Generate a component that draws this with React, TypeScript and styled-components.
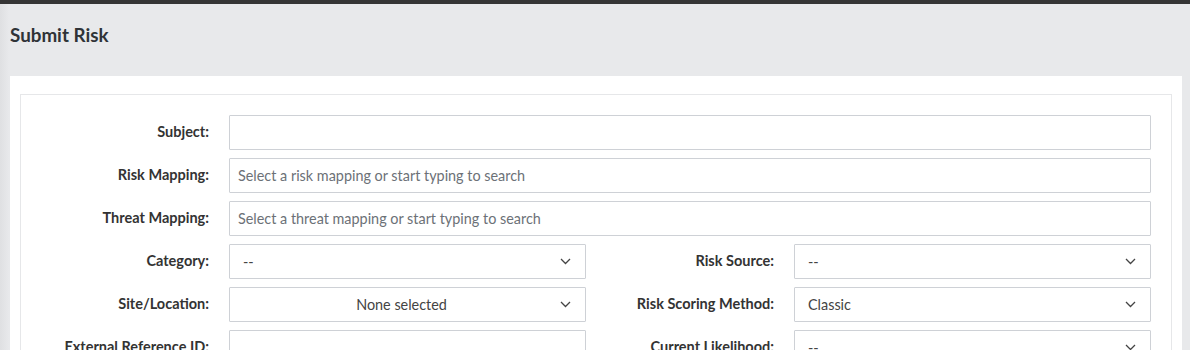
import { FC } from "react";
import styled, { createGlobalStyle } from "styled-components";

const GlobalStyle = createGlobalStyle`
  html, body {
    margin: 0;
    padding: 0;
    background: #e8e9eb;
  }
  body {
    font-family: "Lato", "Noto Sans", sans-serif;
    color: #333;
  }
`;

const Page = styled.div`
  width: 1190px;
  height: 350px;
  overflow: hidden;
  border-top: 4px solid #353535;
  box-sizing: border-box;
  background: linear-gradient(to right, #dfe0e2 0px, #e8e9eb 9px);
`;

const Header = styled.div`
  height: 72px;
  display: flex;
  align-items: center;
  padding: 0 10px;
  box-sizing: border-box;
`;

const Title = styled.h1`
  margin: 0 0 12px;
  font-size: 18.8px;
  font-weight: 700;
  color: #2f3337;
`;

const Card = styled.div`
  margin: 0 8px 0 10px;
  background: #fff;
  padding: 18px 10px 0;
  height: 280px;
`;

const FormBox = styled.div`
  border: 1px solid #e6e7e9;
  border-bottom: none;
  padding: 20px 20px 0 0;
  display: flex;
  flex-direction: column;
  gap: 8px;
`;

const Row = styled.div`
  display: flex;
`;

const Field = styled.div<{ $label: number }>`
  flex: 1;
  display: grid;
  grid-template-columns: ${(p) => p.$label}px 1fr;
  column-gap: 20px;
  align-items: center;
`;

const Label = styled.label`
  text-align: right;
  font-weight: 700;
  font-size: 14.5px;
  color: #333;
  white-space: nowrap;
  padding-bottom: 3px;
`;

const Input = styled.div`
  height: 35px;
  box-sizing: border-box;
  border: 1px solid #ced1d6;
  border-radius: 1px;
  display: flex;
  align-items: center;
  padding: 0 8px 1px;
  font-size: 14.4px;
  color: #6c7177;
`;

const Select = styled(Input)<{ $center?: boolean }>`
  padding: 0 14px 1px 13px;
  color: #444;
  justify-content: space-between;

  span {
    flex: 1;
    text-align: ${(p) => (p.$center ? "center" : "left")};
  }
`;

const Chevron: FC = () => (
  <svg width="11" height="7" viewBox="0 0 11 7">
    <path d="M1 1l4.5 4.5L10 1" fill="none" stroke="#444" strokeWidth="1.3" />
  </svg>
);

const SelectBox: FC<{ text: string; center?: boolean }> = ({ text, center }) => (
  <Select $center={center}>
    <span>{text}</span>
    <Chevron />
  </Select>
);

const LABEL = 188;

const App: FC = () => (
  <>
    <GlobalStyle />
    <Page>
      <Header>
        <Title>Submit Risk</Title>
      </Header>
      <Card>
        <FormBox>
          <Field $label={LABEL}>
            <Label>Subject:</Label>
            <Input />
          </Field>
          <Field $label={LABEL}>
            <Label>Risk Mapping:</Label>
            <Input>Select a risk mapping or start typing to search</Input>
          </Field>
          <Field $label={LABEL}>
            <Label>Threat Mapping:</Label>
            <Input>Select a threat mapping or start typing to search</Input>
          </Field>
          <Row>
            <Field $label={LABEL}>
              <Label>Category:</Label>
              <SelectBox text="--" />
            </Field>
            <Field $label={LABEL}>
              <Label>Risk Source:</Label>
              <SelectBox text="--" />
            </Field>
          </Row>
          <Row>
            <Field $label={LABEL}>
              <Label>Site/Location:</Label>
              <SelectBox text="None selected" center />
            </Field>
            <Field $label={LABEL}>
              <Label>Risk Scoring Method:</Label>
              <SelectBox text="Classic" />
            </Field>
          </Row>
          <Row>
            <Field $label={LABEL}>
              <Label>External Reference ID:</Label>
              <Input />
            </Field>
            <Field $label={LABEL}>
              <Label>Current Likelihood:</Label>
              <SelectBox text="--" />
            </Field>
          </Row>
        </FormBox>
      </Card>
    </Page>
  </>
);

export default App;
